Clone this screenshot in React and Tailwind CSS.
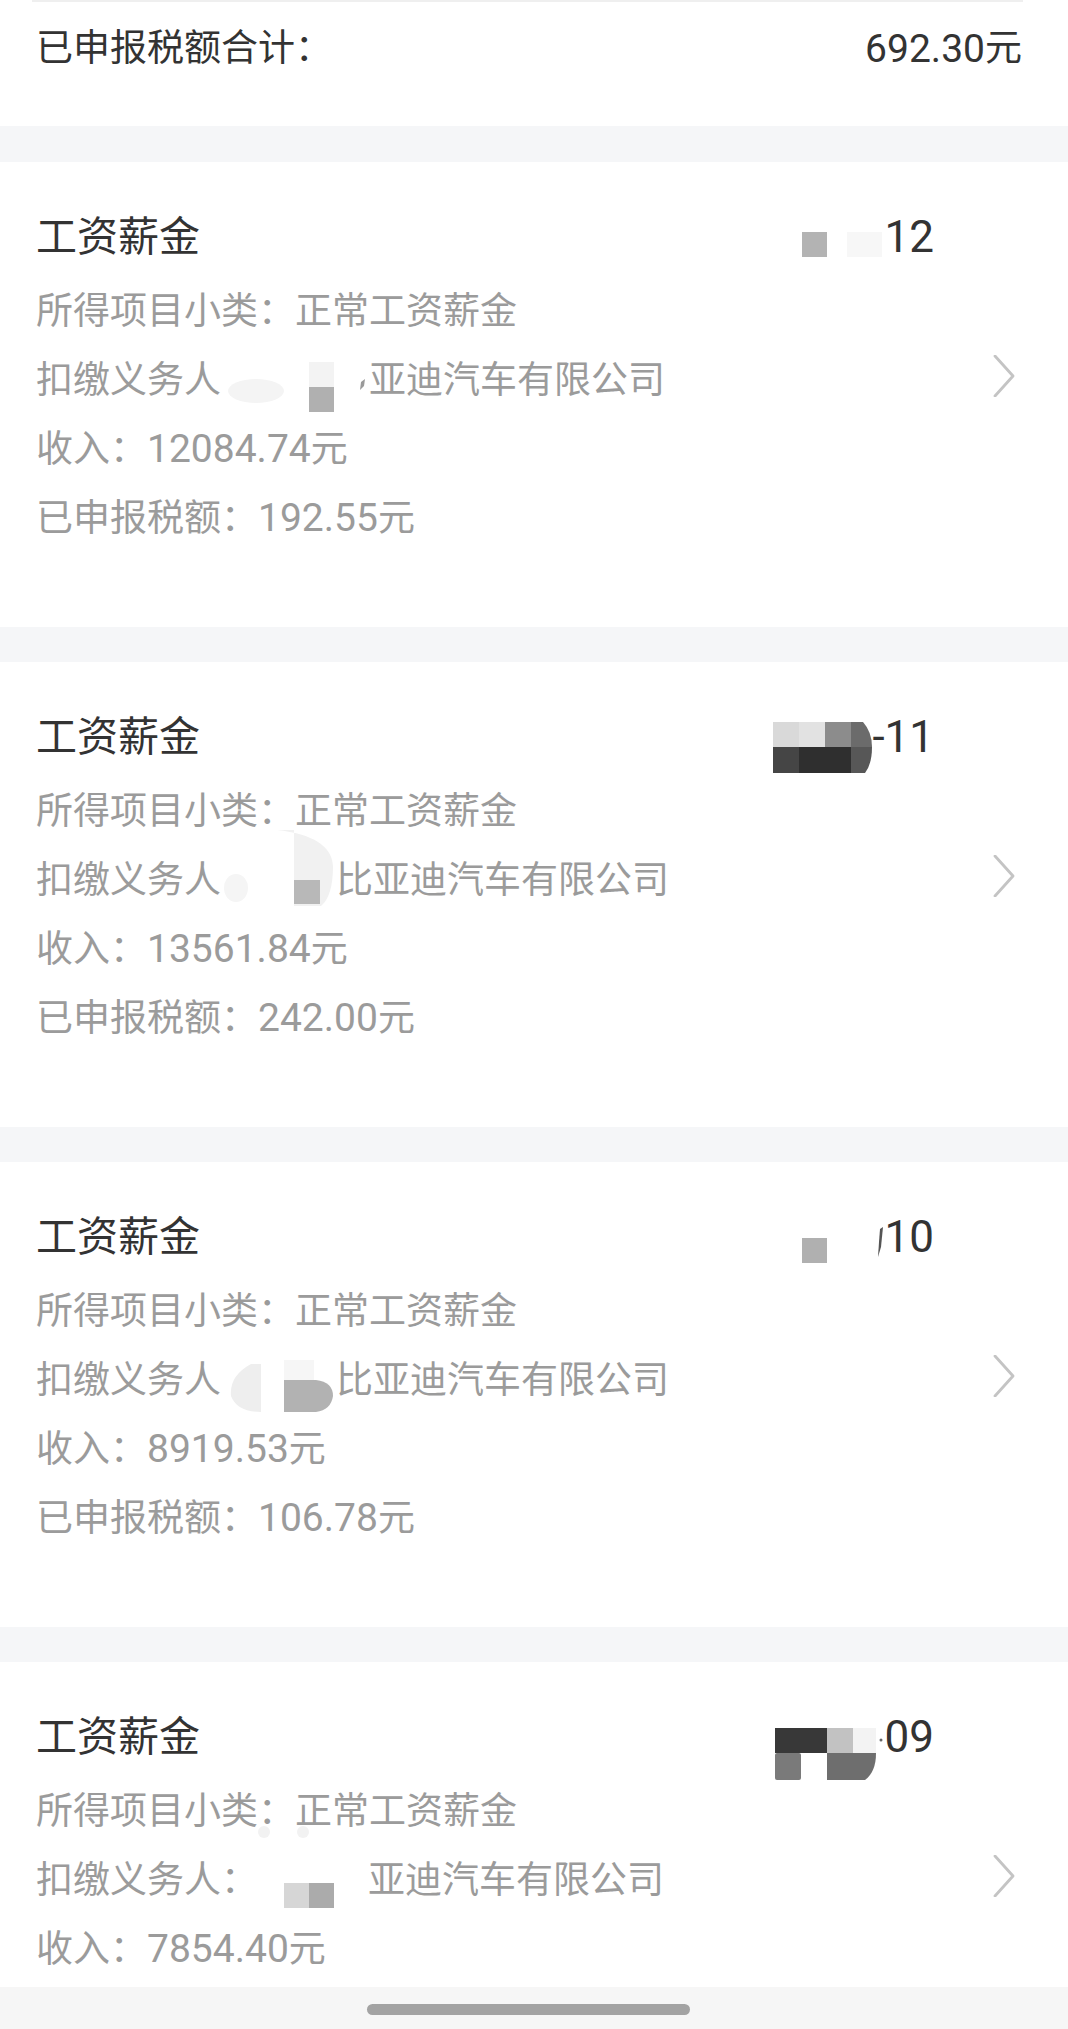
import React from "react";

const FONT = "font-['Roboto','Noto_Sans_CJK_SC',sans-serif]";

function Chevron() {
  return (
    <svg width="22" height="42" viewBox="0 0 22 42" className="shrink-0">
      <polyline points="2,1 20,21 2,41" fill="none" stroke="#c4c4c4" strokeWidth="2.8" strokeLinecap="round" strokeLinejoin="round" />
    </svg>
  );
}

function DateMosaic({ kind }) {
  if (kind === 1) {
    return (
      <svg width="83" height="70" className="shrink-0 overflow-visible">
        <rect x="45" y="30" width="35" height="25" fill="#f7f7f7" />
        <rect x="0" y="30" width="25" height="25" fill="#b3b3b3" />
      </svg>
    );
  }
  if (kind === 2) {
    return (
      <svg width="99" height="70" className="shrink-0 overflow-visible">
        <rect x="0" y="20" width="26" height="25" fill="#d9d9d9" />
        <rect x="26" y="20" width="26" height="25" fill="#e2e2e2" />
        <rect x="52" y="20" width="26" height="25" fill="#8c8c8c" />
        <path d="M78 20 H90 Q99 30 99 45 H78 Z" fill="#6b6b6b" />
        <rect x="0" y="45" width="26" height="26" fill="#454545" />
        <rect x="26" y="45" width="52" height="26" fill="#2f2f2f" />
        <path d="M78 45 H99 Q99 62 92 71 H78 Z" fill="#575757" />
      </svg>
    );
  }
  if (kind === 3) {
    return (
      <svg width="83" height="70" className="shrink-0 overflow-visible">
        <rect x="0" y="36" width="25" height="25" fill="#b0b0b0" />
        <path d="M78 27 L81 25 L79 45 L76 55 L77 40 Z" fill="#555555" />
      </svg>
    );
  }
  return (
    <svg width="110" height="70" className="shrink-0 overflow-visible">
      <rect x="0" y="26" width="52" height="25" fill="#383838" />
      <rect x="52" y="26" width="26" height="25" fill="#c2c2c2" />
      <rect x="78" y="26" width="23" height="25" fill="#f3f3f3" />
      <rect x="0" y="51" width="26" height="27" rx="2" fill="#7a7a7a" />
      <path d="M52 51 H101 Q101 70 90 78 H52 Z" fill="#6e6e6e" />
      <circle cx="106" cy="38" r="1.5" fill="#666666" />
    </svg>
  );
}

function NameMosaic({ kind }) {
  if (kind === 1) {
    return (
      <svg width="148" height="69" className="shrink-0 overflow-visible">
        <ellipse cx="35" cy="45" rx="28" ry="12" fill="#f4f4f4" />
        <rect x="88" y="16" width="25" height="25" fill="#f3f3f3" />
        <rect x="88" y="41" width="25" height="25" fill="#b0b0b0" />
        <path d="M140 36 L144 33 L143 40 L139 44 Z" fill="#9a9a9a" />
      </svg>
    );
  }
  if (kind === 2) {
    return (
      <svg width="115" height="69" className="shrink-0 overflow-visible">
        <ellipse cx="15" cy="42" rx="12" ry="14" fill="#f5f5f5" />
        <path d="M56 -16 Q110 -10 112 20 Q112 50 100 60 L73 60 L73 -16 Z" fill="#f1f1f1" />
        <rect x="73" y="34" width="26" height="24" fill="#b8b8b8" />
      </svg>
    );
  }
  if (kind === 3) {
    return (
      <svg width="115" height="69" className="shrink-0 overflow-visible">
        <path d="M30 18 Q8 30 10 50 Q16 66 40 66 L40 18 Z" fill="#eeeeee" />
        <path d="M63 34 H95 Q112 36 112 50 Q110 64 95 66 H63 Z" fill="#b2b2b2" />
        <rect x="63" y="14" width="30" height="20" fill="#f6f6f6" />
      </svg>
    );
  }
  return (
    <svg width="110" height="69" className="shrink-0 overflow-visible">
      <circle cx="6" cy="-14" r="6" fill="#f2f2f2" />
      <circle cx="45" cy="-14" r="6" fill="#f2f2f2" />
      <rect x="26" y="37" width="25" height="25" fill="#d6d6d6" />
      <rect x="51" y="37" width="25" height="25" fill="#ababab" />
    </svg>
  );
}

const cards = [
  { date: "12", dm: 1, nm: 1, prefix: "扣缴义务人", company: "亚迪汽车有限公司", income: "12084.74", tax: "192.55" },
  { date: "-11", dm: 2, nm: 2, prefix: "扣缴义务人", company: "比亚迪汽车有限公司", income: "13561.84", tax: "242.00" },
  { date: "10", dm: 3, nm: 3, prefix: "扣缴义务人", company: "比亚迪汽车有限公司", income: "8919.53", tax: "106.78" },
  { date: "09", dm: 4, nm: 4, prefix: "扣缴义务人：", company: "亚迪汽车有限公司", income: "7854.40", tax: null },
];

function Card({ c }) {
  return (
    <div className="h-[465px] shrink-0 bg-white flex pl-[36px] pr-[53px] pt-[40px] gap-[59px]">
      <div className="flex-1 flex flex-col">
        <div className="h-[70px] flex items-center justify-between">
          <span className="text-[41px] text-[#333333] leading-[70px]">工资薪金</span>
          <div className="flex items-center h-[70px]">
            <DateMosaic kind={c.dm} />
            <span className="text-[44px] text-[#333333] leading-[70px]">{c.date}</span>
          </div>
        </div>
        <div className="mt-[5px] flex flex-col text-[37px] text-[#9b9b9b]">
          <div className="h-[69px] flex items-center">所得项目小类：正常工资薪金</div>
          <div className="h-[69px] flex items-center">
            <span>{c.prefix}</span>
            <NameMosaic kind={c.nm} />
            <span>{c.company}</span>
          </div>
          <div className="h-[69px] flex items-center">
            <span>收入：</span>
            <span className="text-[39px]">{c.income}</span>
            <span>元</span>
          </div>
          {c.tax && (
            <div className="h-[69px] flex items-center">
              <span>已申报税额：</span>
              <span className="text-[39px]">{c.tax}</span>
              <span>元</span>
            </div>
          )}
        </div>
      </div>
      <div className="mt-[153px]">
        <Chevron />
      </div>
    </div>
  );
}

export default function App() {
  return (
    <div className={`w-[1068px] h-[2029px] bg-white flex flex-col overflow-hidden ${FONT}`}>
      <div className="h-[1987px] overflow-hidden flex flex-col">
        <div className="h-[126px] shrink-0 bg-white flex flex-col">
          <div className="mx-[32px] w-[991px] h-[2px] bg-[#efefef]" />
          <div className="mt-[17px] h-[60px] flex items-center justify-between pl-[36px] pr-[46px]">
            <span className="text-[37px] text-[#333333]">已申报税额合计：</span>
            <span className="flex items-center text-[37px] text-[#333333]">
              <span className="text-[39px]">692.30</span>
              <span>元</span>
            </span>
          </div>
        </div>
        <div className="h-[36px] shrink-0 bg-[#f5f6f8]" />
        <Card c={cards[0]} />
        <div className="h-[35px] shrink-0 bg-[#f5f6f8]" />
        <Card c={cards[1]} />
        <div className="h-[35px] shrink-0 bg-[#f5f6f8]" />
        <Card c={cards[2]} />
        <div className="h-[35px] shrink-0 bg-[#f5f6f8]" />
        <Card c={cards[3]} />
      </div>
      <div className="h-[42px] shrink-0 bg-[#f6f6f6] pt-[17px]">
        <div className="ml-[367px] w-[323px] h-[11px] rounded-full bg-[#a3a3a3]" />
      </div>
    </div>
  );
}
